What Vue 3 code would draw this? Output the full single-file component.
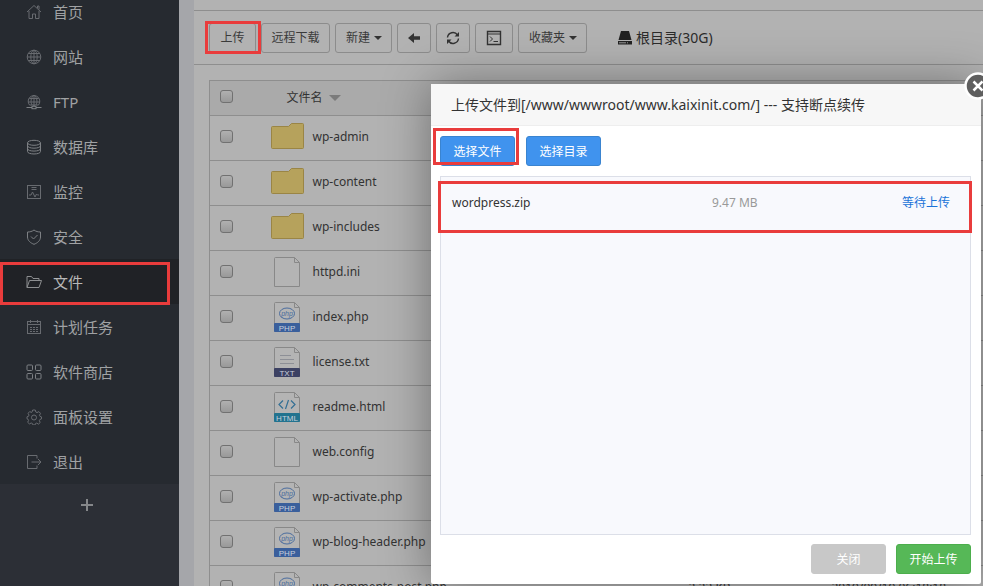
<script setup>
import { ref } from 'vue'

const menu = [
  { name: '首页', icon: 'home' },
  { name: '网站', icon: 'globe' },
  { name: 'FTP', icon: 'ftp' },
  { name: '数据库', icon: 'db' },
  { name: '监控', icon: 'monitor' },
  { name: '安全', icon: 'shield' },
  { name: '文件', icon: 'folder', active: true },
  { name: '计划任务', icon: 'calendar' },
  { name: '软件商店', icon: 'apps' },
  { name: '面板设置', icon: 'gear' },
  { name: '退出', icon: 'exit' },
]

const files = [
  { name: 'wp-admin', type: 'dir' },
  { name: 'wp-content', type: 'dir' },
  { name: 'wp-includes', type: 'dir' },
  { name: 'httpd.ini', type: 'file' },
  { name: 'index.php', type: 'php' },
  { name: 'license.txt', type: 'txt' },
  { name: 'readme.html', type: 'html' },
  { name: 'web.config', type: 'file' },
  { name: 'wp-activate.php', type: 'php' },
  { name: 'wp-blog-header.php', type: 'php' },
  { name: 'wp-comments-post.php', type: 'php', size: '2.23 KB', time: '2019/09/19 06:18:18' },
]

const bands = { php: '#3a5f9c', txt: '#3c4163', html: '#22738f' }
const checked = ref([])
</script>

<template>
  <div class="page">
    <aside class="sidebar">
      <nav class="menu">
        <a v-for="m in menu" :key="m.name" href="#" class="item" :class="{ active: m.active }">
          <svg class="mi" viewBox="0 0 16 16" aria-hidden="true">
            <template v-if="m.icon === 'home'">
              <path d="M1 8 8 1.500l7 6.500M3 7v7.500h3.500V10h3v4.500H13V7M11.500 4V2h1.500v3.500" />
            </template>
            <template v-else-if="m.icon === 'globe'">
              <circle cx="8" cy="8" r="6.800" />
              <ellipse cx="8" cy="8" rx="3.200" ry="6.800" />
              <path d="M8 1.200v13.600M1.200 8h13.600M2.300 4.500h11.400M2.300 11.500h11.400" />
            </template>
            <template v-else-if="m.icon === 'ftp'">
              <path d="M3.500 11a5.800 5.800 0 1 1 9 0zM2.500 8h11M3.300 4.500h9.400M8 1v10M6 11c-1.500-3-1.500-7 2-10 3.500 3 3.500 7 2 10" />
              <path class="bold" d="M.5 13.500h5.500M10 13.500h5.500M8 11v1" />
              <rect class="bold" x="6" y="12.300" width="4" height="2.400" />
            </template>
            <template v-else-if="m.icon === 'db'">
              <ellipse class="mid" cx="8" cy="3.800" rx="6.500" ry="2.500" />
              <path class="mid" d="M1.500 3.800v8.700c0 3.300 13 3.300 13 0V3.800M1.500 6.700c0 3.300 13 3.300 13 0M1.500 9.600c0 3.300 13 3.300 13 0" />
            </template>
            <template v-else-if="m.icon === 'monitor'">
              <rect x="1.500" y="1.500" width="13" height="13" />
              <path d="M3 11h2l1.500-3 2.500 5 1.500-3 1 1H13M5.500 3.500h5M5.500 5.500h5" />
            </template>
            <template v-else-if="m.icon === 'shield'">
              <path class="mid" d="M8 1c2 1.500 4 2 6.500 2v5c0 3.500-3 6-6.500 7.300C4.500 14 1.500 11.500 1.500 8V3C4 3 6 2.500 8 1z" />
              <path class="bold" d="m5 7.500 2.500 2.500 4-4" />
            </template>
            <template v-else-if="m.icon === 'folder'">
              <path d="M1 13.500V2.500h4.500L7 4.500h6v2M1 13.500l2.500-7h12L13 13.500z" />
            </template>
            <template v-else-if="m.icon === 'calendar'">
              <rect x="1.500" y="2.500" width="13" height="12" />
              <path d="M1.500 5.500h13M4.500 1v3M11.500 1v3" />
              <path class="dots" d="M4 8.500h9M4 10.500h9M4 12.500h9" />
            </template>
            <template v-else-if="m.icon === 'apps'">
              <rect class="mid" x="1" y="1" width="5.500" height="5.500" rx="1" />
              <rect class="mid" x="9.500" y="1" width="5.500" height="5.500" rx="1" />
              <rect class="mid" x="1" y="9.500" width="5.500" height="5.500" rx="1" />
              <rect class="mid" x="9.500" y="9.500" width="5.500" height="5.500" rx="1" />
            </template>
            <template v-else-if="m.icon === 'gear'">
              <path d="m6.700 1h2.600l.5 2 1.200.6 1.900-1 1.600 1.800-1 1.800.5 1.200 1.500.5v2l-1.600.6-.6 1.200.9 1.800-1.700 1.600-1.800-1-1.200.5-.5 1.400H7l-.6-1.500-1.200-.5-1.800.9-1.700-1.600.9-1.900-.6-1.200-1-.4v-2l1.500-.5.5-1.200-.9-1.800 1.600-1.700 1.900.9L6 3z" />
              <circle cx="8" cy="8.500" r="2.500" />
            </template>
            <template v-else>
              <path d="M11 4.500v-3H1.500v13H11v-3M5.500 8H15M12 5l3 3-3 3" />
            </template>
          </svg>
          <span>{{ m.name }}</span>
        </a>
        <i class="mark mark-menu"></i>
      </nav>
      <button class="add" type="button" aria-label="+">
        <svg viewBox="0 0 14 14" aria-hidden="true"><path d="M7 1v12M1 7h12" /></svg>
      </button>
    </aside>

    <main class="main">
      <div class="toolbar">
        <div class="upload-wrap">
          <button class="btn" type="button">上传</button>
          <i class="mark mark-upload"></i>
        </div>
        <button class="btn remote" type="button">远程下载</button>
        <button class="btn drop" type="button">新建<i class="caret"></i></button>
        <button class="btn icon" type="button" aria-label="back">
          <svg viewBox="0 0 16 16" aria-hidden="true"><path class="fill" d="M2 8l6-5v3.300h6v3.400H8V13z" /></svg>
        </button>
        <button class="btn icon" type="button" aria-label="refresh">
          <svg viewBox="0 0 16 16" aria-hidden="true">
            <path class="line" d="M2.500 7.500A5.500 5.500 0 0 1 12.500 5M13.500 8.500A5.500 5.500 0 0 1 3.500 11" />
            <path class="fill" d="M14 2v4.500H9.500zM2 14V9.500h4.500z" />
          </svg>
        </button>
        <button class="btn icon term" type="button" aria-label="terminal">
          <svg viewBox="0 0 16 16" aria-hidden="true">
            <path class="line" d="M1.500 1.500h13v13h-13z" />
            <path class="line thin" d="M1.500 4h13M4 6.500 6.500 9 4 11.500M7.500 11.500H12" />
          </svg>
        </button>
        <button class="btn drop" type="button">收藏夹<i class="caret"></i></button>
        <a class="disk" href="#">
          <svg viewBox="0 0 16 16" aria-hidden="true">
            <path d="M4 1h8l2.500 9h-13zM1 11h14v3.500H1z" />
            <path class="slot" d="M2 12.800h10" />
          </svg>
          <span>根目录(30G)</span>
        </a>
      </div>

      <table class="files">
        <thead>
          <tr>
            <th class="c-check"><input v-model="checked" type="checkbox" value="*" aria-label="*" /></th>
            <th class="c-name head">文件名<i class="sort"></i></th>
            <th class="c-size"></th>
            <th class="c-time"></th>
          </tr>
        </thead>
        <tbody>
          <tr v-for="f in files" :key="f.name">
            <td class="c-check"><input :id="f.name" v-model="checked" type="checkbox" :value="f.name" /></td>
            <td class="c-name">
              <label class="file" :for="f.name">
                <svg class="fi" viewBox="0 0 34 32" aria-hidden="true">
                  <path v-if="f.type === 'dir'" d="M1.500 6.500q0-1 1-1h16l3-3h11q1 0 1 1v23q0 1-1 1h-30q-1 0-1-1z" fill="#b6a25c" stroke="#9a8545" />
                  <template v-else>
                    <path d="M5.500 1.500h19l5 5v24h-25v-28q0-1 1-1z" fill="#b4b4b4" stroke="#888" />
                    <path d="M24.500 1.500v5h5" fill="none" stroke="#888" />
                  </template>
                  <template v-if="bands[f.type]">
                    <rect x="4" y="22" width="26" height="9" rx="1" :fill="bands[f.type]" />
                    <text x="17" y="29.500" class="band">{{ f.type.toUpperCase() }}</text>
                  </template>
                  <template v-if="f.type === 'php'">
                    <ellipse cx="17" cy="12.500" rx="7.500" ry="5.500" fill="none" stroke="#4a6c9e" />
                    <text x="17" y="15" class="oval">php</text>
                  </template>
                  <path v-if="f.type === 'txt'" d="M10 9.500h11M10 13.500h14M10 17.500h14" stroke="#8d8f96" />
                  <path v-if="f.type === 'html'" d="m13 9.500-4 4 4 4M21 9.500l4 4-4 4M18.500 9l-3 9" fill="none" stroke="#336f94" stroke-width="1.200" />
                </svg>
                <span>{{ f.name }}</span>
              </label>
            </td>
            <td class="c-size">{{ f.size }}</td>
            <td class="c-time">{{ f.time }}</td>
          </tr>
        </tbody>
      </table>
    </main>

    <section class="dialog" role="dialog" aria-labelledby="dlg-title">
      <h1 id="dlg-title">上传文件到[/www/wwwroot/www.kaixinit.com/] --- 支持断点续传</h1>
      <button class="close" type="button" aria-label="close">
        <svg viewBox="0 0 28 28" aria-hidden="true">
          <circle cx="14" cy="14" r="12.500" />
          <path d="m9.500 9.500 9 9M18.500 9.500l-9 9" />
        </svg>
      </button>
      <div class="body">
        <div class="picks">
          <button class="blue" type="button">选择文件</button>
          <button class="blue" type="button">选择目录</button>
          <i class="mark mark-pick"></i>
        </div>
        <ul class="queue">
          <li>
            <span class="q-name">wordpress.zip</span>
            <span class="q-size">9.47 MB</span>
            <span class="q-state">等待上传</span>
            <i class="mark mark-row"></i>
          </li>
        </ul>
        <div class="actions">
          <button class="grey" type="button">关闭</button>
          <button class="green" type="button">开始上传</button>
        </div>
      </div>
    </section>
  </div>
</template>

<style>
body {
  margin: 0;
  overflow: hidden;
}
</style>

<style scoped>
.page {
  position: relative;
  display: flex;
  height: 100vh;
  overflow: hidden;
  background: #a5a6aa;
  color: #333;
  font: 12px/20px "Noto Sans", "Noto Sans CJK SC", sans-serif;
}
.page * {
  box-sizing: border-box;
}
button {
  font: inherit;
  margin: 0;
  white-space: nowrap;
}
a {
  text-decoration: none;
}
.mark {
  position: absolute;
  border: 3px solid #e93c3c;
  pointer-events: none;
}

/* sidebar */
.sidebar {
  flex: none;
  width: 179px;
  background: #2c2f36;
}
.menu {
  position: relative;
  margin-top: -11px;
  background: #262a30;
}
.item {
  display: flex;
  align-items: center;
  gap: 11px;
  height: 45px;
  padding-left: 26px;
  color: #a0a2a4;
  font-size: 15px;
}
.item.active {
  background: #202226;
  color: #b8b8b8;
}
.mi {
  width: 16px;
  height: 16px;
  fill: none;
  stroke: #686b70;
}
.mi .bold,
.mi .mid {
  stroke: #7d8084;
}
.mi .dots {
  stroke-dasharray: 2 1;
}
.active .mi {
  stroke: #8c8e90;
}
.mark-menu {
  top: 273px;
  left: 0;
  right: 9px;
  height: 43px;
}
.add {
  display: flex;
  justify-content: center;
  align-items: center;
  width: 100%;
  height: 42px;
  padding: 0 6px 0 0;
  border: 0;
  background: none;
}
.add svg {
  width: 14px;
  height: 14px;
  fill: none;
  stroke: #85878a;
  stroke-width: 2;
}

/* file manager */
.main {
  flex: 1;
  min-width: 0;
  margin-left: 15px;
  background: #b2b2b2;
}
.toolbar {
  display: flex;
  align-items: center;
  gap: 5px;
  height: 55px;
  margin-top: 10px;
  padding-left: 15px;
  border-top: 1px solid #8e8e8e;
  border-bottom: 1px solid #8e8e8e;
}
.btn {
  display: flex;
  align-items: center;
  justify-content: center;
  gap: 4px;
  height: 30px;
  padding: 0;
  border: 1px solid #8c8c8c;
  border-radius: 3px;
  background: #b2b2b2;
  color: #3a3a3a;
}
.upload-wrap {
  position: relative;
}
.mark-upload {
  inset: -2px -5px -1px -4px;
}
.upload-wrap .btn {
  width: 47px;
}
.remote {
  width: 69px;
}
.drop {
  padding: 0 9px 0 10px;
}
.icon {
  width: 34px;
}
.term {
  width: 38px;
}
.icon svg {
  width: 16px;
  height: 16px;
}
.fill {
  fill: #333;
}
.line {
  fill: none;
  stroke: #333;
  stroke-width: 1.400;
}
.line.thin {
  stroke-width: 1;
}
.caret {
  border: 4px solid transparent;
  border-top-color: #333;
  border-bottom: 0;
}
.disk {
  display: flex;
  align-items: center;
  gap: 3px;
  margin-left: 25px;
  color: #2b2b2b;
  font-size: 14px;
}
.disk svg {
  width: 16px;
  height: 16px;
  fill: #222;
}
.disk .slot {
  stroke: #999;
  stroke-dasharray: 7 1 1 1;
}
.files {
  width: calc(100% + 30px);
  margin: 15px 0 0 15px;
  border-collapse: collapse;
  table-layout: fixed;
  border: 1px solid #8e8e8e;
}
.files th,
.files td {
  height: 45px;
  padding: 0;
  border-bottom: 1px solid #8e8e8e;
  text-align: left;
  font-weight: 400;
}
.files th {
  height: 35px;
  background: #aaa;
}
.files .c-check {
  width: 60px;
  padding-left: 10px;
}
.c-size {
  width: 143px;
}
.c-time {
  width: 196px;
}
.c-name {
  white-space: nowrap;
}
.files .head {
  padding-left: 17px;
}
.sort {
  display: inline-block;
  margin-left: 6px;
  border: 6px solid transparent;
  border-top-color: #7b7b7b;
  border-bottom: 0;
  vertical-align: 1px;
}
.files input {
  appearance: none;
  display: block;
  width: 13px;
  height: 13px;
  margin: 0 0 4px;
  border: 1px solid #717171;
  border-radius: 3px;
  background: linear-gradient(#b0b0b0, #999);
}
.file {
  display: flex;
  align-items: center;
  gap: 9px;
  padding-bottom: 2px;
}
.fi {
  width: 34px;
  height: 32px;
}
.band {
  fill: #c8d0dc;
  font: 8px "Liberation Sans", sans-serif;
  text-anchor: middle;
}
.oval {
  fill: #4a6c9e;
  font: italic 7px "Liberation Sans", sans-serif;
  text-anchor: middle;
}

/* upload dialog */
.dialog {
  position: absolute;
  top: 84px;
  right: 2px;
  bottom: 2px;
  left: 431px;
  display: flex;
  flex-direction: column;
  border-radius: 2px;
  background: #fff;
  box-shadow: 1px 1px 50px rgba(0, 0, 0, 0.4);
}
.dialog h1 {
  height: 42px;
  margin: 0;
  padding: 0 20px;
  border-bottom: 1px solid #eee;
  background: #f7f7f7;
  font-size: 14px;
  font-weight: 400;
  line-height: 42px;
  white-space: nowrap;
}
.close {
  position: absolute;
  top: -12px;
  right: -11px;
  width: 28px;
  height: 28px;
  padding: 0;
  border: 0;
  background: none;
}
.close svg {
  display: block;
  fill: #5f5f5f;
  stroke: #fff;
  stroke-width: 2.500;
}
.body {
  flex: 1;
  display: flex;
  flex-direction: column;
  gap: 9px;
  padding: 10px 10px 10px 9px;
}
.picks {
  position: relative;
  display: flex;
  gap: 11px;
}
.mark-pick {
  top: -8px;
  left: -7px;
  width: 86px;
  height: 37px;
}
.blue,
.grey,
.green {
  width: 75px;
  height: 30px;
  padding: 2px 0 0;
  border: 1px solid #3a84d0;
  border-radius: 3px;
  background: #4093ee;
  color: #fff;
}
.grey {
  border-color: #c8c8c8;
  background: #c8c8c8;
}
.green {
  border-color: #4cae4c;
  background: #56b857;
}
.queue {
  flex: 1;
  margin: 1px 0 0;
  padding: 5px 0;
  border: 1px solid #dcdfe8;
  background: #f8f9fd;
  list-style: none;
}
.queue li {
  position: relative;
  display: flex;
  height: 50px;
  padding: 11px 20px 9px 11px;
}
.q-name {
  flex: 1;
}
.q-size {
  width: 190px;
  color: #999;
}
.q-state {
  color: #1a73d8;
}
.mark-row {
  inset: -1px -2px -1px -3px;
}
.actions {
  display: flex;
  justify-content: flex-end;
  gap: 10px;
}
</style>
